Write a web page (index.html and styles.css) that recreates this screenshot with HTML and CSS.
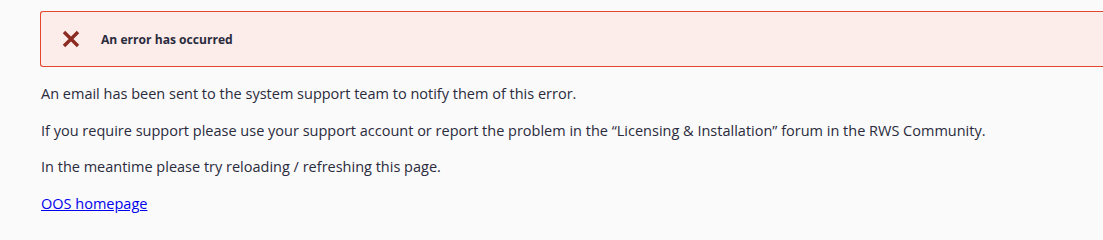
FILE: index.html
```html
<!DOCTYPE html>
<html lang="en">
<head>
<meta charset="utf-8">
<title>Error</title>
<link rel="stylesheet" href="styles.css">
</head>
<body>
<main class="page">
  <div class="alert">
    <svg class="alert-icon" width="18" height="18" viewBox="0 0 18 18" aria-hidden="true">
      <path d="M2 2 L16 16 M16 2 L2 16" stroke="#8c2b22" stroke-width="3.4" stroke-linecap="butt" fill="none"/>
    </svg>
    <span class="alert-title">An error has occurred</span>
  </div>
  <p class="msg">An email has been sent to the system support team to notify them of this error.</p>
  <p class="msg">If you require support please use your support account or report the problem in the “Licensing &amp; Installation” forum in the RWS Community.</p>
  <p class="msg">In the meantime please try reloading / refreshing this page.</p>
  <p class="msg"><a class="home-link" href="#">OOS homepage</a></p>
</main>
</body>
</html>
```

FILE: styles.css
```css
html, body {
  margin: 0;
  padding: 0;
  background: #fafafa;
}
body {
  font-family: "Open Sans", "Noto Sans", "Liberation Sans", sans-serif;
  color: #2a2b3d;
}
.page {
  padding: 11px 0 0 40px;
}
.alert {
  display: flex;
  align-items: center;
  height: 54px;
  border: 1px solid #e4472c;
  border-right: none;
  border-radius: 3px 0 0 3px;
  background: #fcecea;
  padding-left: 21px;
  margin-bottom: 16px;
}
.alert-icon {
  flex: none;
  margin-right: 21px;
}
.alert-title {
  font-size: 12.1px;
  font-weight: 700;
  color: #2a2b3d;
}
.msg {
  margin: 0 0 14.5px 1px;
  font-size: 14.5px;
  line-height: 22px;
}
.home-link {
  color: #0000ee;
  text-decoration: underline;
}
```
